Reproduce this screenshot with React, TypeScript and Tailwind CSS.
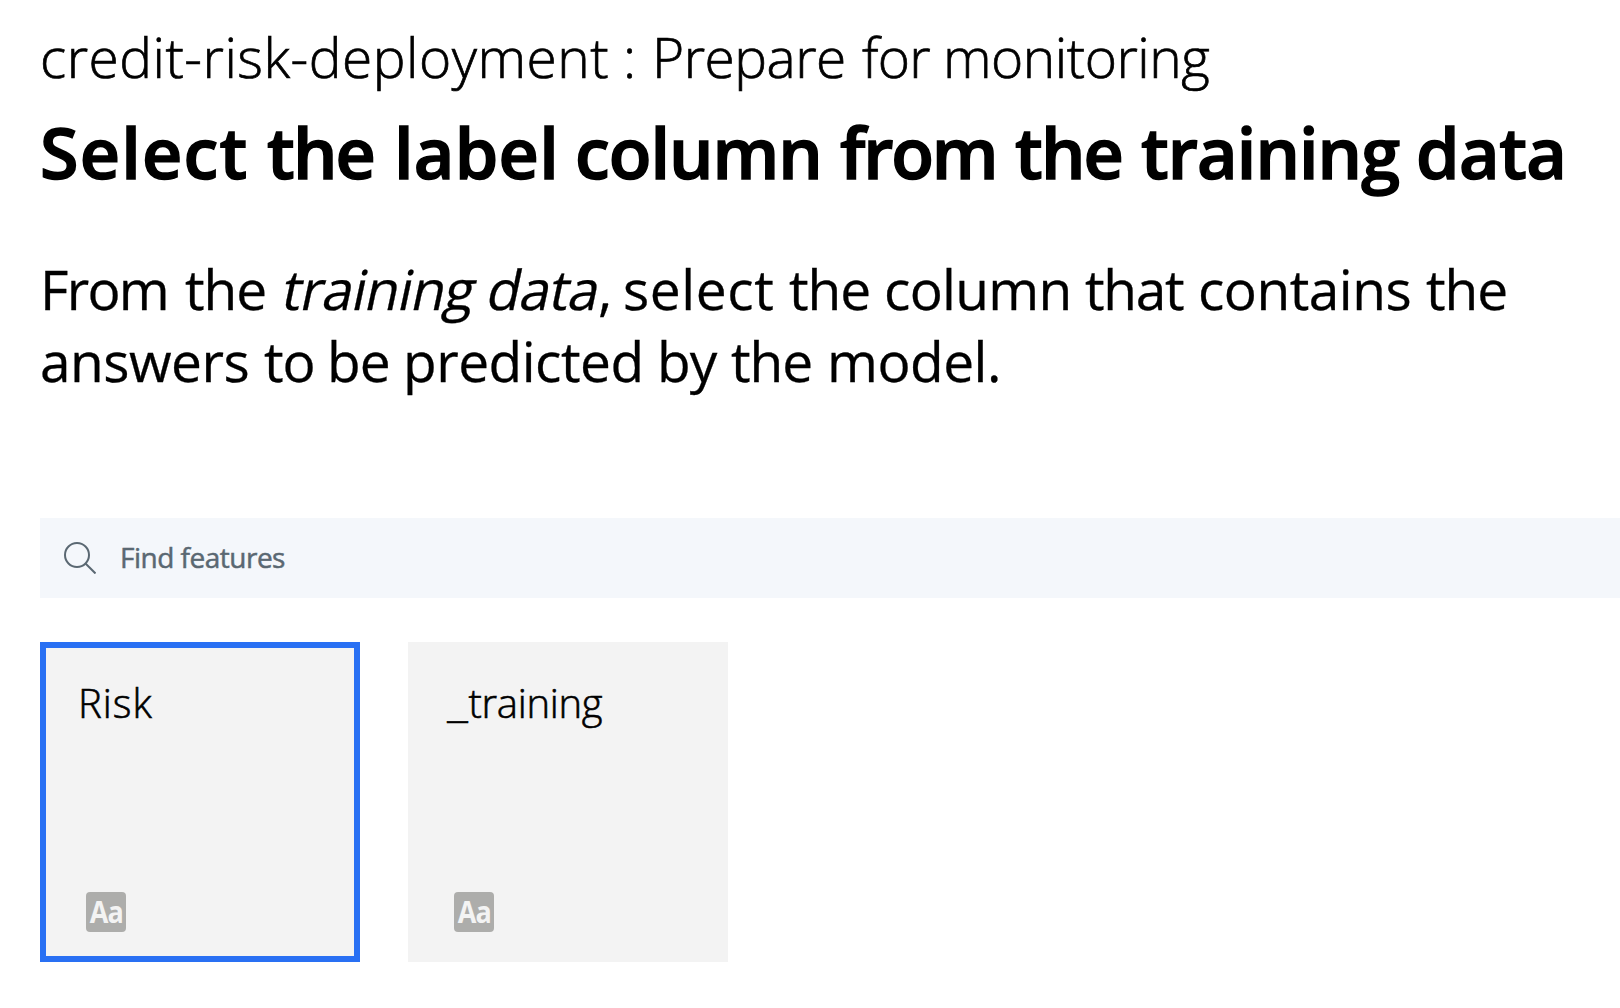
import type { ReactNode } from 'react';

function Word({ className, children }: { className: string; children: ReactNode }) {
  return <span className={`inline-block shrink-0 ${className}`}>{children} </span>;
}

function FeatureCard({ selected = false, children }: { selected?: boolean; children: ReactNode }) {
  return (
    <button
      type="button"
      className={`flex h-80 w-80 flex-col items-start justify-between border-[6px] bg-[#f3f3f3] pt-[30px] pb-6 pl-10 text-left ${
        selected ? 'border-[#2970f3]' : 'border-[#f3f3f3]'
      }`}
    >
      <span className="-ml-2 flex text-[40px] leading-[50px] font-light whitespace-nowrap [-webkit-text-stroke:0.6px_black]">
        {children}
      </span>
      <span className="flex h-10 w-10 items-center justify-center rounded-[4px] bg-[#adadab] text-[30px] leading-10 font-bold text-[#f3f3f3]">
        <span className="inline-block scale-x-[0.9] tracking-[-1px]">Aa</span>
      </span>
    </button>
  );
}

export default function App() {
  return (
    <main className="h-[1008px] w-[1620px] overflow-hidden bg-white pl-10 font-['Open_Sans',sans-serif] whitespace-nowrap text-black">
      <header className="pt-[22px]">
        <p className="flex text-[55px] leading-[70px] font-light [-webkit-text-stroke:0.7px_black]">
          <Word className="w-[583px] tracking-[0.5px]">credit-risk-deployment</Word>
          <Word className="w-[29px]">:</Word>
          <Word className="w-[210px] tracking-[-0.5px]">Prepare</Word>
          <Word className="w-[81px] tracking-[-0.8px]">for</Word>
          <Word className="tracking-[-0.5px]">monitoring</Word>
        </p>
        <h1 className="mt-2.5 flex text-[70px] leading-[100px] font-semibold [-webkit-text-stroke:1.5px_black]">
          <Word className="w-[227px] tracking-[1.2px]">Select</Word>
          <Word className="w-[127px] tracking-[-1.8px]">the</Word>
          <Word className="w-[181px] tracking-[0.3px]">label</Word>
          <Word className="w-[265px] tracking-[-1px]">column</Word>
          <Word className="w-[175px] tracking-[-2.2px]">from</Word>
          <Word className="w-[126px] tracking-[-1.8px]">the</Word>
          <Word className="w-[275px] tracking-[-0.9px]">training</Word>
          <Word className="tracking-[-0.5px]">data</Word>
        </h1>
      </header>
      <div className="mt-[51px] text-[55px] leading-[72px] [-webkit-text-stroke:0.3px_black]">
        <p className="flex">
          <Word className="w-[145px] tracking-[-1.7px]">From</Word>
          <Word className="w-[99px] tracking-[-1px]">the</Word>
          <Word className="w-[339px]">
            <em className="inline-block -skew-x-12 tracking-[-0.8px] not-italic">training data</em>
            <span className="-ml-[2px]">,</span>
          </Word>
          <Word className="w-[166px] tracking-[0.6px]">select</Word>
          <Word className="w-[95px] tracking-[-1px]">the</Word>
          <Word className="w-[201px] tracking-[-0.7px]">column</Word>
          <Word className="w-[113px] tracking-[-1.3px]">that</Word>
          <Word className="w-[228px] tracking-[-0.5px]">contains</Word>
          <Word className="tracking-[-1px]">the</Word>
        </p>
        <p className="flex">
          <Word className="w-[224px] tracking-[-0.5px]">answers</Word>
          <Word className="w-[63px] tracking-[-1px]">to</Word>
          <Word className="w-[76px] tracking-[-1px]">be</Word>
          <Word className="w-[254px] tracking-[-0.5px]">predicted</Word>
          <Word className="w-[74px] tracking-[-1px]">by</Word>
          <Word className="w-[96px] tracking-[-1px]">the</Word>
          <Word className="tracking-[-0.5px]">model.</Word>
        </p>
      </div>
      <div className="mt-[121px] flex h-20 items-center bg-[#f4f7fb] pl-6 text-[#5a6872]">
        <svg className="h-8 w-8" viewBox="0 0 32 32" fill="none" stroke="currentColor" strokeWidth="2">
          <circle cx="13" cy="13" r="12" />
          <path d="M21.5 21.5 31.5 31.5" />
        </svg>
        <span className="mb-0.5 ml-6 text-[28px] leading-10 tracking-[-0.5px] [-webkit-text-stroke:0.5px_#5a6872]">
          Find features
        </span>
      </div>
      <div className="mt-11 flex gap-12">
        <FeatureCard selected>
          <span className="tracking-[1px]">Risk</span>
        </FeatureCard>
        <FeatureCard>
          <span className="mr-[5px] inline-block origin-left scale-x-125 pl-px">_</span>
          <span className="tracking-[-0.3px]">training</span>
        </FeatureCard>
      </div>
    </main>
  );
}
